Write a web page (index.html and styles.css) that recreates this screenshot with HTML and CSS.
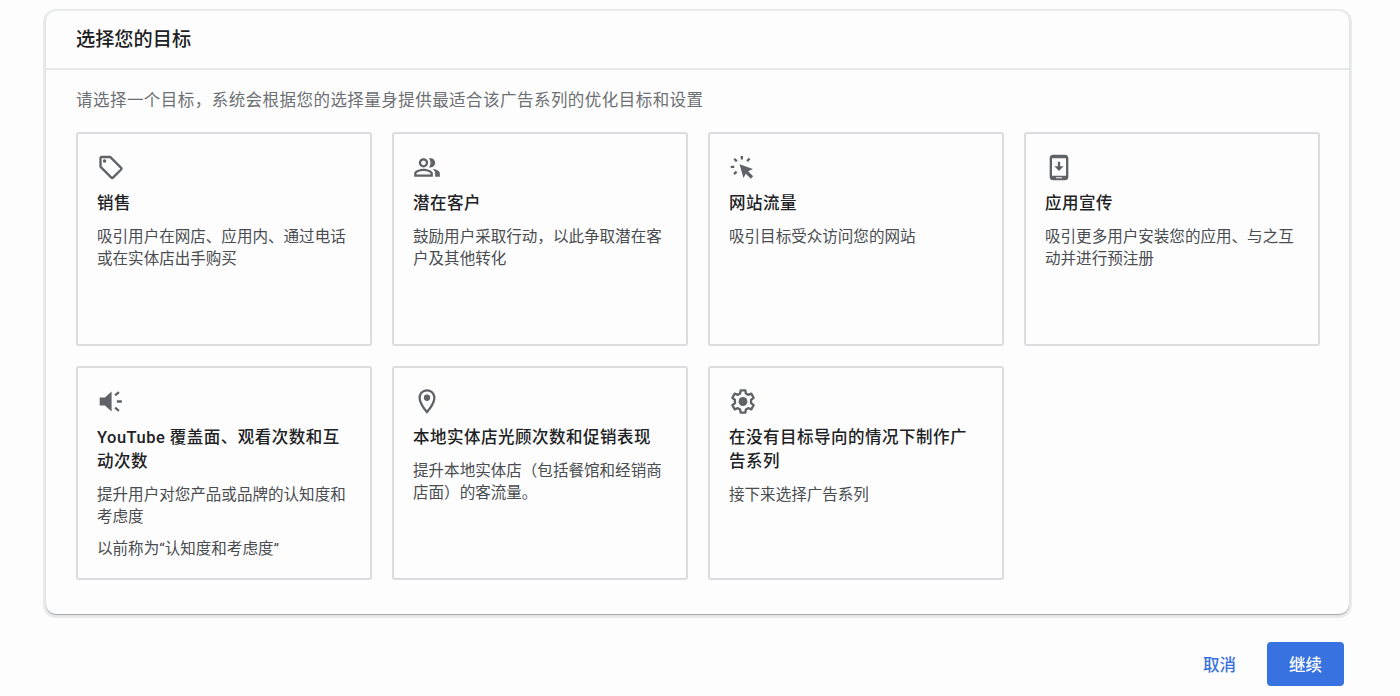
FILE: index.html
```html
<!DOCTYPE html>
<html lang="zh-CN">
<head>
  <meta charset="UTF-8" />
  <meta name="viewport" content="width=device-width, initial-scale=1.0" />
  <title>选择您的目标</title>
  <link rel="stylesheet" href="styles.css">
</head>
<body>
  <main class="panel">
    <header class="panel-header">
      <h1>选择您的目标</h1>
    </header>
    <div class="panel-body">
      <p class="intro">请选择一个目标，系统会根据您的选择量身提供最适合该广告系列的优化目标和设置</p>
      <div class="goals">
        <div class="goal">
          <svg class="icon" viewBox="0 0 24 24"><path d="M21.41 11.58l-9-9C12.05 2.22 11.55 2 11 2H4c-1.1 0-2 .9-2 2v7c0 .55.22 1.05.59 1.42l9 9c.36.36.86.58 1.41.58s1.05-.22 1.41-.59l7-7c.37-.36.59-.86.59-1.41s-.23-1.06-.59-1.42zM13 20.01L4 11V4h7v-.01l9 9-7 7.02z"/><circle cx="6.5" cy="6.5" r="1.5"/></svg>
          <h2>销售</h2>
          <p>吸引用户在网店、应用内、通过电话或在实体店出手购买</p>
        </div>
        <div class="goal">
          <svg class="icon" viewBox="0 0 24 24"><path d="M9 12c2.21 0 4-1.79 4-4s-1.79-4-4-4-4 1.79-4 4 1.79 4 4 4zm0-6c1.1 0 2 .9 2 2s-.9 2-2 2-2-.9-2-2 .9-2 2-2zM9 13c-2.67 0-8 1.34-8 4v3h16v-3c0-2.66-5.33-4-8-4zm6 5H3v-.99C3.2 16.29 6.3 15 9 15s5.8 1.29 6 2v1zM15 12c2.21 0 4-1.79 4-4s-1.79-4-4-4c-.47 0-.91.1-1.33.24C14.5 5.27 15 6.58 15 8s-.5 2.73-1.33 3.76c.42.14.86.24 1.33.24zM16.67 13.13C18.04 14.06 19 15.32 19 17v3h4v-3c0-2.18-3.57-3.47-6.33-3.87z"/></svg>
          <h2>潜在客户</h2>
          <p>鼓励用户采取行动，以此争取潜在客户及其他转化</p>
        </div>
        <div class="goal">
          <svg class="icon" viewBox="0 0 24 24"><path d="M9 9.3l11.500 4-4.100 2 4.300 4.300-2 2-4.300-4.300-2 3.700z"/><path d="M11 2.200v3M4.500 4.500l2.200 2.200M1.500 11.500h3M4.300 17.700l2.200-2.100M15.500 6.500l2.200-2.200" class="rays"/></svg>
          <h2>网站流量</h2>
          <p>吸引目标受众访问您的网站</p>
        </div>
        <div class="goal">
          <svg class="icon" viewBox="0 0 24 24"><path fill-rule="evenodd" d="M7 1h10a3 3 0 0 1 3 3v16a3 3 0 0 1-3 3H7a3 3 0 0 1-3-3V4a3 3 0 0 1 3-3zM6 4v15h12V4zM9.500 20.300v1h5v-1z"/><path d="M13 11V7h-2v4H8l4 4 4-4z"/></svg>
          <h2>应用宣传</h2>
          <p>吸引更多用户安装您的应用、与之互动并进行预注册</p>
        </div>
        <div class="goal">
          <svg class="icon" viewBox="0 0 24 24"><path d="M2.300 8.500h4.500l5.700-5v17l-5.700-5H2.300z"/><path d="M15.500 6.700l3.300-2.700M17 12h4.300M15.500 17.300l3.300 2.700" class="rays"/></svg>
          <h2>YouTube 覆盖面、观看次数和互动次数</h2>
          <p>提升用户对您产品或品牌的认知度和考虑度</p>
          <p>以前称为“认知度和考虑度”</p>
        </div>
        <div class="goal">
          <svg class="icon" viewBox="0 0 24 24"><path fill-rule="evenodd" d="M12 1.500C7.900 1.500 4.700 4.700 4.700 8.900c0 5.600 7.300 13.600 7.300 13.600s7.300-8 7.300-13.600C19.300 4.700 16.100 1.500 12 1.500zm0 2c3 0 5.300 2.400 5.300 5.400 0 3.100-3 7.800-5.300 10.600-2.300-2.800-5.300-7.500-5.300-10.600C6.700 5.900 9 3.500 12 3.500z"/><circle cx="12" cy="8.800" r="2.700"/></svg>
          <h2>本地实体店光顾次数和促销表现</h2>
          <p>提升本地实体店（包括餐馆和经销商店面）的客流量。</p>
        </div>
        <div class="goal">
          <svg class="icon" viewBox="0 0 24 24"><path class="gear" d="M10 2.500h4l.5 2.700 1.900 1.100 2.700-1 2 3.500-2.200 1.900v2.600l2.200 1.900-2 3.500-2.700-1-1.900 1.100-.5 2.700h-4l-.5-2.700-1.900-1.100-2.700 1-2-3.500 2.200-1.900v-2.600L2.900 8.800l2-3.500 2.700 1 1.900-1.100z"/><circle cx="12" cy="12" r="3.800"/></svg>
          <h2>在没有目标导向的情况下制作广告系列</h2>
          <p>接下来选择广告系列</p>
        </div>
      </div>
    </div>
  </main>
  <div class="actions">
    <button class="btn">取消</button>
    <button class="btn btn-primary">继续</button>
  </div>
</body>
</html>
```
FILE: styles.css
```css
* { box-sizing: border-box; }
body { margin: 0; padding: 11px 51px 0 46px; background: #fdfdfd; color: #202124; font-family: Roboto, "Noto Sans CJK SC", sans-serif; }
h1, h2, p { margin: 0; }

.panel { height: 603px; border-radius: 10px; background: #fdfdfd; box-shadow: 0 1px 1px rgba(60,64,67,0.4), 0 1px 0 3px #e9eaeb; }
.panel-header { height: 59px; padding: 1px 30px 0; display: flex; align-items: center; border-bottom: 2px solid #e6e7e8; }
.panel-header h1 { font-size: 19.2px; line-height: 28px; font-weight: 500; }
.panel-body { padding: 18px 30px 0; }
.intro { font-size: 16.5px; letter-spacing: 0.46px; line-height: 26px; color: #6c6f73; }

.goals { display: grid; grid-template-columns: repeat(4, 296px); grid-auto-rows: 214px; gap: 20px; margin-top: 18px; }
.goal { border: 2px solid #dadce0; border-radius: 3px; padding: 19px 19px 0; }
.goal h2 { margin-top: 10px; font-size: 16.5px; letter-spacing: 0.5px; line-height: 24px; font-weight: 500; }
.goal p { margin-top: 10px; font-size: 15.55px; line-height: 22px; color: #494c50; }
.icon { display: block; width: 28px; height: 29px; fill: #5f6368; }
.rays { fill: none; stroke: #5f6368; stroke-width: 2; }
.gear { fill: none; stroke: #5f6368; stroke-width: 2; stroke-linejoin: round; }

.actions { display: flex; justify-content: flex-end; gap: 15px; margin-top: 28px; padding-right: 5px; }
.btn { height: 44px; width: 65px; padding: 0; border: none; border-radius: 4px; background: none; color: #3871e0; font: 500 16.5px Roboto, "Noto Sans CJK SC", sans-serif; }
.btn-primary { width: 77px; background: #3871e0; color: #fff; }
```
